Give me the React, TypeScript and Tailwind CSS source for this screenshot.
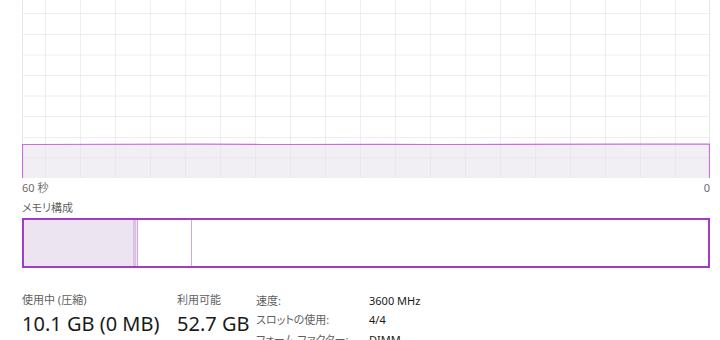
import React from "react";

const FONT = '"Segoe UI", "Noto Sans", "Noto Sans CJK JP", sans-serif';

function Graph() {
  const W = 688;
  const H = 178;
  const hLines = [1, 2, 3, 4, 5, 6, 7, 8].map((k) => Math.round((H - 20.6 * k) * 2) / 2 + 0.5);
  const vLines = Array.from({ length: 19 }, (_, k) => 23 + 35 * k + 0.5);
  const lineY = 144.5;
  const pts = `0.5,${H} 0.5,${lineY} 180,${lineY - 0.3} 240,${lineY} 360,${lineY - 0.2} 420,${lineY} 600,${lineY - 0.4} ${W - 0.5},${lineY - 0.4} ${W - 0.5},${H}`;
  return (
    <svg width={W} height={H} className="block">
      <rect x={0} y={0} width={W} height={H} fill="#ffffff" />
      <polygon points={pts} fill="#f2eff4" />
      {hLines.map((y) => (
        <line key={"h" + y} x1={0} x2={W} y1={y} y2={y} stroke="#e8e6ea" strokeOpacity={0.7} strokeWidth={1} />
      ))}
      {vLines.map((x) => (
        <line key={"v" + x} x1={x} x2={x} y1={0} y2={H} stroke="#e8e6ea" strokeOpacity={0.7} strokeWidth={1} />
      ))}
      <line x1={0.5} x2={0.5} y1={0} y2={H} stroke="#e6e6e6" />
      <line x1={W - 0.5} x2={W - 0.5} y1={0} y2={H} stroke="#e6e6e6" />
      <polyline points={pts} fill="none" stroke="#c86fda" strokeWidth={1.2} />
    </svg>
  );
}

export default function App() {
  return (
    <div
      className="w-[720px] h-[340px] bg-white overflow-hidden pl-[22px] pr-[10px] [font-feature-settings:'palt']"
      style={{ fontFamily: FONT }}
    >
      <Graph />
      <div className="flex h-[20px] w-[688px] items-center justify-between text-[11px] text-[#6b6b6b]">
        <span>60 秒</span>
        <span>0</span>
      </div>
      <div className="flex h-[20px] items-center text-[11px] text-[#5f5f5f]">メモリ構成</div>
      <div className="flex h-[50px] w-[688px] border-2 border-[#a23cc6]">
        <div className="w-[109px] bg-[#ede4f2]" />
        <div className="w-[3px] bg-[#dcc1e5]" />
        <div className="w-[1px] bg-[#eee2f2]" />
        <div className="w-[1px] bg-[#d3a9df]" />
        <div className="w-[53px] bg-white" />
        <div className="w-[1px] bg-[#d3aadf]" />
        <div className="flex-1 bg-white" />
      </div>
      <div className="mt-[22px] flex whitespace-nowrap">
        <div className="flex w-[155px] flex-col">
          <div className="flex h-[20px] items-center text-[11px] text-[#5f5f5f]">使用中 (圧縮)</div>
          <div className="flex h-[28px] items-center text-[20px] text-[#1a1a1a]">10.1 GB (0 MB)</div>
        </div>
        <div className="flex w-[79px] flex-col">
          <div className="flex h-[20px] items-center text-[11px] text-[#5f5f5f]">利用可能</div>
          <div className="flex h-[28px] items-center text-[20px] text-[#1a1a1a]">52.7 GB</div>
        </div>
        <div className="mt-[1px] grid grid-cols-[113px_auto] text-[11px]">
          <div className="flex h-[19.5px] items-center text-[#5f5f5f]">速度:</div>
          <div className="flex h-[19.5px] items-center text-[#1a1a1a]">3600 MHz</div>
          <div className="flex h-[19.5px] items-center text-[#5f5f5f]">スロットの使用:</div>
          <div className="flex h-[19.5px] items-center text-[#1a1a1a]">4/4</div>
          <div className="flex h-[19.5px] items-center text-[#5f5f5f]">フォーム ファクター:</div>
          <div className="flex h-[19.5px] items-center text-[#1a1a1a]">DIMM</div>
        </div>
      </div>
    </div>
  );
}
